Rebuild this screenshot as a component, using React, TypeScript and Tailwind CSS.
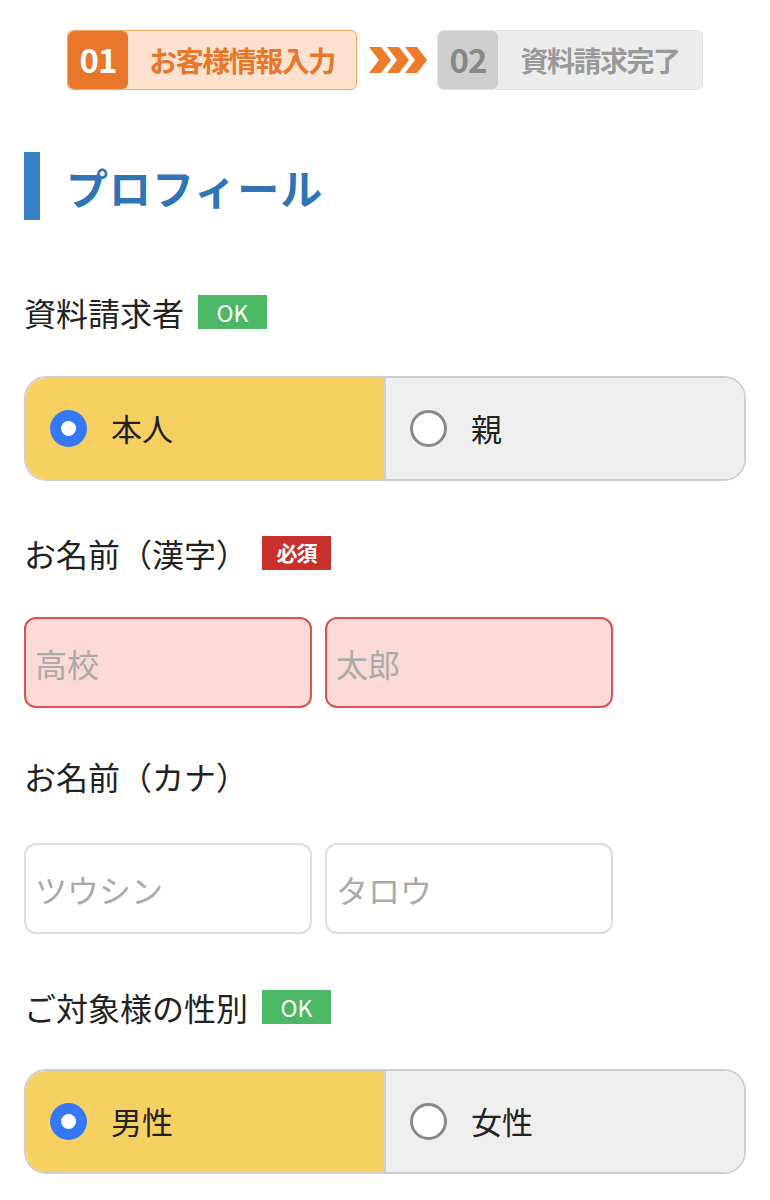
import * as React from 'react';

const font = { fontFamily: '"Noto Sans CJK JP", "Noto Sans", sans-serif' };

function Badge({ kind }: { kind: 'ok' | 'req' }) {
  if (kind === 'ok') {
    return (
      <span className="ml-[14px] inline-flex h-[34px] w-[69px] items-center justify-center bg-[#4cb765] text-[23px] text-white">
        OK
      </span>
    );
  }
  return (
    <span className="ml-[14px] inline-flex h-[34px] w-[69px] items-center justify-center bg-[#c9302c] text-[21px] font-bold tracking-[-1px] text-white">
      必須
    </span>
  );
}

function Label({ text, badge }: { text: string; badge?: 'ok' | 'req' }) {
  return (
    <div className="flex h-[34px] items-center">
      <span className="text-[32px] leading-none text-[#222]">{text}</span>
      {badge && <Badge kind={badge} />}
    </div>
  );
}

function RadioPair({ options, selected }: { options: string[]; selected: number }) {
  return (
    <div className="flex h-[105px] overflow-hidden rounded-[22px] border-2 border-[#cfcfcf]">
      {options.map((o, i) => (
        <div
          key={o}
          className={`flex flex-1 items-center pl-[24px] ${i === selected ? 'bg-[#f7d062]' : 'bg-[#efefef]'} ${i === 1 ? 'border-l-2 border-[#cfcfcf]' : ''}`}
        >
          {i === selected ? (
            <span className="flex h-[37px] w-[37px] items-center justify-center rounded-full bg-[#3478f6]">
              <span className="h-[15px] w-[15px] rounded-full bg-white" />
            </span>
          ) : (
            <span className="h-[37px] w-[37px] rounded-full border-[3px] border-[#8a8a8a] bg-white" />
          )}
          <span className="ml-[24px] text-[31px] text-[#222]">{o}</span>
        </div>
      ))}
    </div>
  );
}

function TextInput({ placeholder, error }: { placeholder: string; error?: boolean }) {
  return (
    <div
      className={`flex h-[91px] w-[288px] items-center rounded-[12px] border-2 px-[9px] ${error ? 'border-[#d9534f] bg-[#f9dad8]' : 'border-[#dedede] bg-white'}`}
    >
      <span className="text-[32px] text-[#aaa]">{placeholder}</span>
    </div>
  );
}

export default function App() {
  return (
    <div className="min-h-[1200px] bg-white px-[24px] pt-[30px]" style={font}>
      {/* Steps */}
      <div className="flex items-center justify-center">
        <div className="flex h-[60px] w-[290px] overflow-hidden rounded-[6px] border border-[#f2a766] bg-[#fde3cf]">
          <div className="flex w-[60px] items-center justify-center rounded-[6px] bg-[#e8762b] text-[33px] font-bold tracking-[-1px] text-white">
            01
          </div>
          <div className="flex flex-1 items-center justify-center text-[28px] font-bold tracking-[-1.5px] text-[#e8762b]">
            お客様情報入力
          </div>
        </div>
        <svg width="60" height="30" viewBox="0 0 60 30" className="mx-[10px]">
          {[0, 18, 36].map((x) => (
            <path key={x} d={`M${x + 2} 2 L${x + 14} 2 L${x + 24} 15 L${x + 14} 28 L${x + 2} 28 L${x + 12} 15 Z`} fill="#ee7a2a" />
          ))}
        </svg>
        <div className="flex h-[60px] w-[266px] overflow-hidden rounded-[6px] border border-[#e2e2e2] bg-[#ededed]">
          <div className="flex w-[60px] items-center justify-center rounded-[6px] bg-[#cfcfcf] text-[33px] font-bold tracking-[-1px] text-[#888]">
            02
          </div>
          <div className="flex flex-1 items-center justify-center text-[28px] font-bold tracking-[-1.5px] text-[#999]">
            資料請求完了
          </div>
        </div>
      </div>

      {/* Heading */}
      <div className="mt-[62px] flex h-[68px] items-center">
        <div className="h-[68px] w-[16px] bg-[#3a82c8]" />
        <h1 className="ml-[26px] text-[42px] font-bold tracking-[1px] text-[#2f74b5]">プロフィール</h1>
      </div>

      <div className="mt-[75px]">
        <Label text="資料請求者" badge="ok" />
      </div>
      <div className="mt-[47px]">
        <RadioPair options={['本人', '親']} selected={0} />
      </div>

      <div className="mt-[55px]">
        <Label text="お名前（漢字）" badge="req" />
      </div>
      <div className="mt-[47px] flex gap-[13px]">
        <TextInput placeholder="高校" error />
        <TextInput placeholder="太郎" error />
      </div>

      <div className="mt-[51px]">
        <Label text="お名前（カナ）" />
      </div>
      <div className="mt-[50px] flex gap-[13px]">
        <TextInput placeholder="ツウシン" />
        <TextInput placeholder="タロウ" />
      </div>

      <div className="mt-[56px]">
        <Label text="ご対象様の性別" badge="ok" />
      </div>
      <div className="mt-[45px]">
        <RadioPair options={['男性', '女性']} selected={0} />
      </div>
    </div>
  );
}
